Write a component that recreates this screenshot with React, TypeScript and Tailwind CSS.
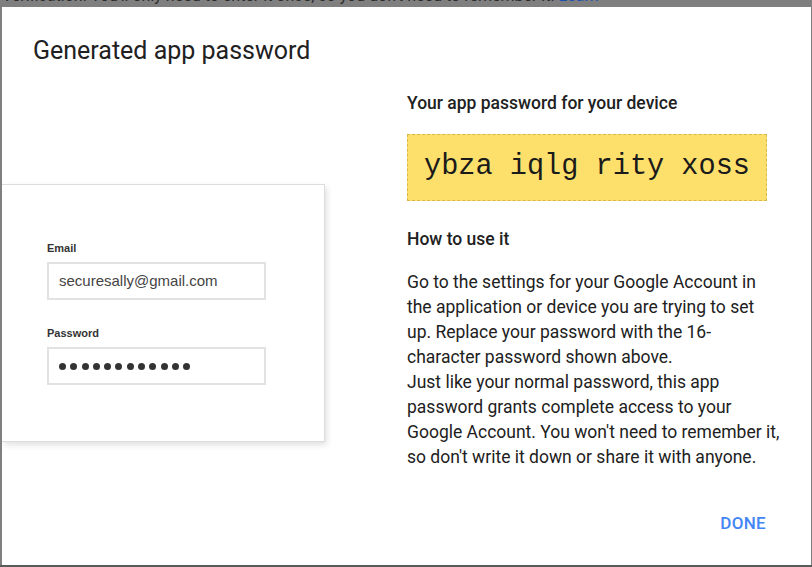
import React from 'react';

const roboto = { fontFamily: 'Roboto, "Noto Sans", Arial, sans-serif' };

export default function App() {
  const dots = Array.from({ length: 12 });

  return (
    <div className="relative w-[812px] h-[567px] overflow-hidden bg-[#7f7f7f]" style={roboto}>
      {/* Page behind the dialog */}
      <div className="h-[8px] overflow-hidden">
        <p className="-mt-[14px] pl-[2px] text-[16px] leading-[20px] text-[#2a2a2a] whitespace-nowrap">
          Verification. You'll only need to enter it once, so you don't need to remember it. <span className="text-[#1a4fb0]">Learn</span>
        </p>
      </div>

      {/* Dialog */}
      <div className="absolute left-[2px] top-[7px] w-[809px] h-[558px] bg-white flex flex-col overflow-hidden">
        <h1 className="pl-[31px] pt-[30px] text-[25px] leading-[28px] font-normal text-[#212121]">
          Generated app password
        </h1>

        <div className="flex flex-1">
          {/* Illustration */}
          <div className="w-[405px] shrink-0">
            <div className="mt-[119px] w-[323px] h-[258px] bg-white border border-l-0 border-[#dcdcdc] shadow-[2px_3px_6px_rgba(0,0,0,0.12)] pl-[45px] pt-[56px]" style={{ fontFamily: '"Liberation Sans", Arial, sans-serif' }}>
              <div className="text-[11px] leading-[14px] font-bold text-[#333]">Email</div>
              <div className="mt-[7px] w-[219px] h-[38px] border-2 border-[#e2e2e2] flex items-center pl-[10px] text-[15px] text-[#444]">
                securesally@gmail.com
              </div>
              <div className="mt-[26px] text-[11px] leading-[14px] font-bold text-[#333]">Password</div>
              <div className="mt-[7px] w-[219px] h-[38px] border-2 border-[#e2e2e2] flex items-center pl-[10px] gap-[4.3px]">
                {dots.map((_, i) => (
                  <span key={i} className="w-[7px] h-[7px] rounded-full bg-[#333]" />
                ))}
              </div>
            </div>
          </div>

          {/* Instructions */}
          <div className="w-[374px] text-[#212121]">
            <div className="mt-[28px] text-[17.5px] leading-[20px] font-medium">Your app password for your device</div>
            <div className="mt-[21px] w-[360px] h-[67px] bg-[#fde06c] border border-dashed border-[#d7b94a] flex items-center justify-center">
              <span className="text-[28.6px] leading-none text-[#1a1a1a]" style={{ fontFamily: '"Liberation Mono", "Courier New", monospace' }}>
                ybza iqlg rity xoss
              </span>
            </div>
            <div className="mt-[28px] text-[17.5px] leading-[20px] font-medium">How to use it</div>
            <p className="mt-[21px] text-[17.5px] leading-[25px]">
              Go to the settings for your Google Account in the application or device you are trying to set up. Replace your password with the 16-character password shown above.
              <br />
              Just like your normal password, this app password grants complete access to your Google Account. You won't need to remember it, so don't write it down or share it with anyone.
            </p>
          </div>
        </div>

        <div className="flex justify-end pr-[45px] pb-[32px]">
          <button className="text-[17px] leading-[20px] font-medium tracking-[0.3px] text-[#4285f4]">DONE</button>
        </div>
      </div>

      <div className="absolute left-0 bottom-0 w-full h-[2px] bg-[#5a5a5a]" />
    </div>
  );
}
